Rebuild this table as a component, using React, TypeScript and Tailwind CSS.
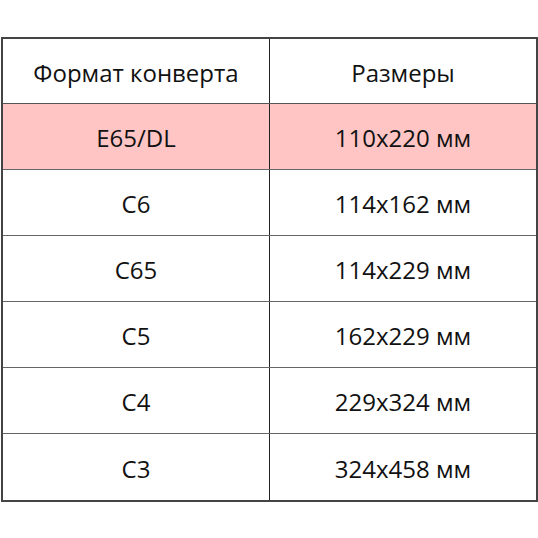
const rows = [
  ['E65/DL', '110x220 мм'],
  ['C6', '114x162 мм'],
  ['C65', '114x229 мм'],
  ['C5', '162x229 мм'],
  ['C4', '229x324 мм'],
  ['C3', '324x458 мм'],
];

export default function App() {
  return (
    <div className="h-[538px] w-[538px] bg-white pt-[37px] pl-[1px] font-['Open_Sans',sans-serif] text-[24px] text-[#111]">
      <div className="w-[537px] border-2 border-[#444]">
        <div className="grid h-[65px] grid-cols-[267px_1fr] border-b border-[#555]">
          <div className="flex items-center justify-center pt-[3px] border-r border-[#222]">Формат конверта</div>
          <div className="flex items-center justify-center pt-[3px]">Размеры</div>
        </div>
        {rows.map(([name, size], i) => (
          <div
            key={name}
            className={`grid h-[66px] grid-cols-[267px_1fr] ${i < rows.length - 1 ? 'border-b border-[#666]' : ''} ${i === 0 ? 'bg-[#ffc5c5]' : ''}`}
          >
            <div className="flex items-center justify-center pt-[3px] border-r border-[#222]">{name}</div>
            <div className="flex items-center justify-center pt-[3px]">{size}</div>
          </div>
        ))}
      </div>
    </div>
  );
}
